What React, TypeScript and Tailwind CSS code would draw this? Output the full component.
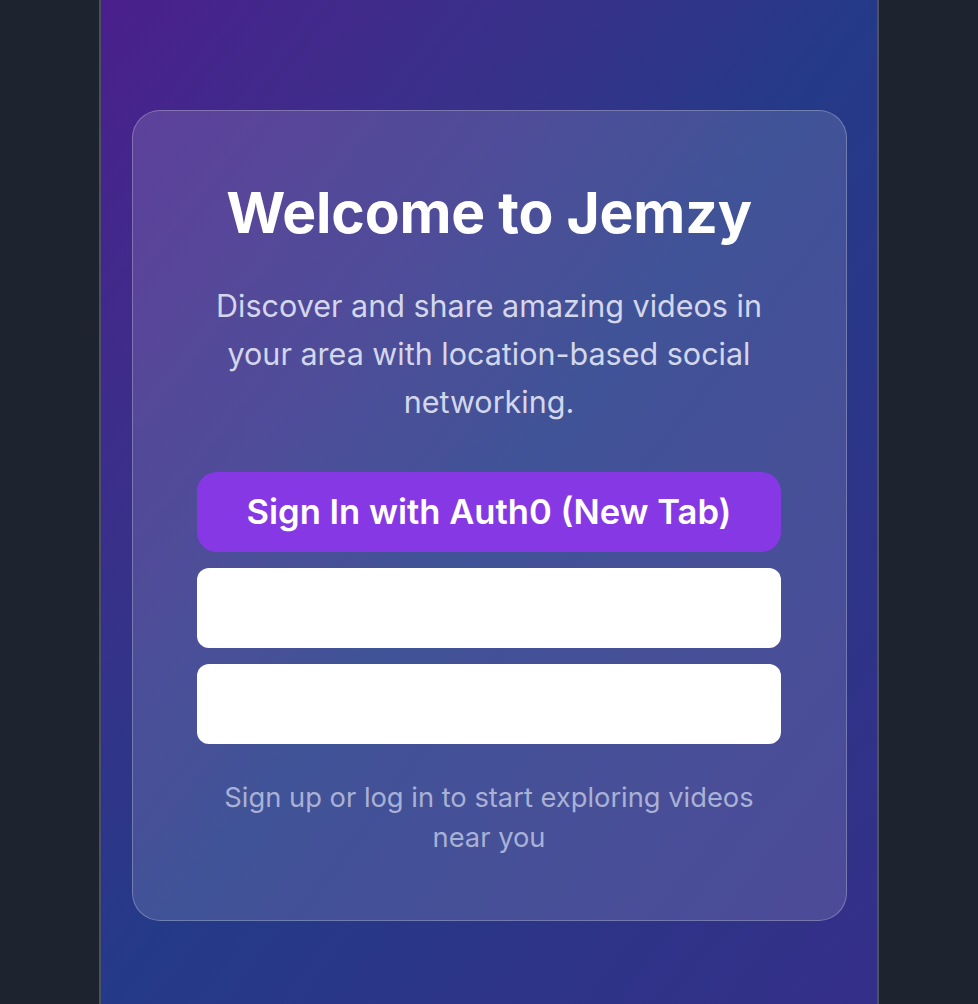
import React from "react";

export default function App() {
  return (
    <div
      className="min-h-screen w-full bg-[#1e2330] flex justify-center"
      style={{ fontFamily: "Inter, 'Noto Sans', sans-serif" }}
    >
      <div className="w-[780px] min-h-[1004px] border-x-2 border-[#4b5161] bg-gradient-to-br from-[#4a1f8c] via-[#243a88] to-[#342f88] flex flex-col items-center pt-[110px] px-[32px]">
        <div className="w-[715px] rounded-[28px] border border-white/25 bg-white/[0.13] pt-[64px] pb-[62px] flex flex-col items-center text-center">
          <h1 className="text-[57px] leading-[75px] font-bold text-white tracking-[-0.2px]">
            Welcome to Jemzy
          </h1>
          <p className="mt-[32px] text-[30.5px] leading-[48px] text-[#d3d7ec] max-w-[580px]">
            Discover and share amazing videos in your area with location-based social networking.
          </p>
          <div className="mt-[46px] w-[584px] flex flex-col gap-[16px]">
            <button className="h-[80px] w-full rounded-[20px] bg-[#8638e4] text-white text-[34.6px] font-semibold">
              Sign In with Auth0 (New Tab)
            </button>
            <div className="h-[80px] w-full rounded-[12px] bg-white" />
            <div className="h-[80px] w-full rounded-[12px] bg-white" />
          </div>
          <p className="mt-[34px] text-[27.3px] leading-[40px] text-[#a9b1d6] max-w-[560px]">
            Sign up or log in to start exploring videos near you
          </p>
        </div>
      </div>
    </div>
  );
}
